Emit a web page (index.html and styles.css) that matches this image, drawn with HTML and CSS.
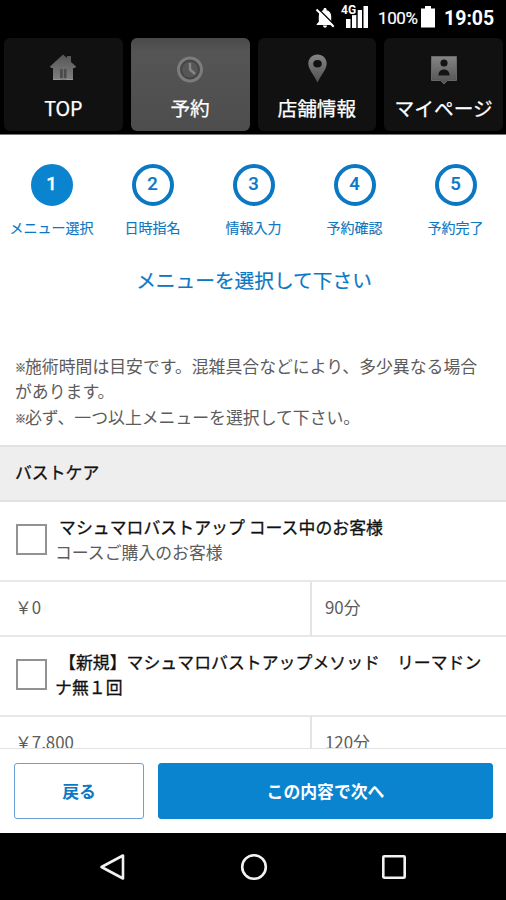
FILE: index.html
```html
<!DOCTYPE html>
<html lang="ja">
<head>
<meta charset="utf-8">
<title>メニュー選択</title>
<link rel="stylesheet" href="styles.css">
</head>
<body>
<div class="status">
  <svg class="bell" width="20" height="22" viewBox="0 0 20 22"><path fill="#fff" d="M10 1c1 0 1.600.7 1.600 1.600v.6c3 .7 4.600 3 4.600 6v5.500l2.200 2.500v.8H1.600v-.8l2.200-2.500V9.200c0-3 1.600-5.300 4.600-6v-.6C8.400 1.700 9 1 10 1zM7.900 18.600h4.200a2.100 2.100 0 0 1-4.200 0z"/><path stroke="#000" stroke-width="1.500" d="M3.500 2l17 17"/><path stroke="#fff" stroke-width="2" d="M1.500 2.500l17.200 17.200"/></svg>
  <div class="signal">
    <span class="net">4G</span>
    <svg width="24" height="24" viewBox="0 0 24 24"><path fill="#fff" d="M1 14h4.500v9H1zM7 10h4.300v13H7zM12.700 5H17v18h-4.300zM18.500 1H23v22h-4.500z"/></svg>
  </div>
  <span class="percent">100%</span>
  <svg class="battery" width="14" height="22" viewBox="0 0 14 22"><path fill="#fff" d="M4 0h6v2.500h4V21.500H0V2.500h4z"/></svg>
  <span class="time">19:05</span>
</div>
<nav class="tabs">
  <div class="tab">
    <svg width="28" height="32" viewBox="0 0 28 32"><defs><linearGradient id="g" x1="0" y1="0" x2="0" y2="1"><stop offset="0" stop-color="#555"/><stop offset="1" stop-color="#808080"/></linearGradient><linearGradient id="h" x1="0" y1="0" x2="0" y2="1"><stop offset="0" stop-color="#858585"/><stop offset="1" stop-color="#515151"/></linearGradient></defs><path fill="url(#g)" d="M14 2.500l4 3.500V4h4v6l5 4.500-1 1.500h-2v12H4V16H2l-1-1.500z"/><path fill="#4b4b4b" d="M11 17h6.500v9H11z"/><path stroke="#777" d="M14.300 17v9"/><path stroke="#999" d="M4 27.500h7M17.500 27.500H24"/></svg>
    <span>TOP</span>
  </div>
  <div class="tab active">
    <svg width="28" height="32" viewBox="0 0 28 32"><circle cx="14" cy="17.500" r="11.500" fill="#444" stroke="#7c7c7c" stroke-width="3"/><circle cx="14" cy="17.500" r="8" fill="#565656"/><path d="M14 11v6.500l5 4.500" fill="none" stroke="#868686" stroke-width="2.400"/></svg>
    <span>予約</span>
  </div>
  <div class="tab">
    <svg width="28" height="32" viewBox="0 0 28 32"><path fill="url(#h)" fill-rule="evenodd" d="M14.500 2.500c5.200 0 9.200 3.900 9.200 9 0 6-5.500 11-9.200 19-3.700-8-9.200-13-9.200-19 0-5.100 4-9 9.200-9zm0 5.500a4.300 3.800 0 1 0 0 7.600 4.300 3.800 0 0 0 0-7.600z"/></svg>
    <span>店舗情報</span>
  </div>
  <div class="tab">
    <svg width="28" height="32" viewBox="0 0 28 32"><path fill="url(#h)" stroke="#686868" stroke-width="1" d="M1.500 4.500h25v24h-9L14 32l-3.500-3.500h-9z"/><circle cx="14" cy="11" r="3.600" fill="#141414"/><path fill="#141414" d="M8.500 23.500c-.5-8 11.500-8 11 0z"/></svg>
    <span>マイページ</span>
  </div>
</nav>
<main class="page">
  <ol class="steps">
    <li class="current"><b>1</b><span>メニュー選択</span></li>
    <li><b>2</b><span>日時指名</span></li>
    <li><b>3</b><span>情報入力</span></li>
    <li><b>4</b><span>予約確認</span></li>
    <li><b>5</b><span>予約完了</span></li>
  </ol>
  <h1>メニューを選択して下さい</h1>
  <p class="notes"><i>※</i>施術時間は目安です。混雑具合などにより、多少異なる場合<br>があります。<br><i>※</i>必ず、一つ以上メニューを選択して下さい。</p>
  <h2>バストケア</h2>
  <section class="item">
    <span class="check"></span>
    <div class="copy"><strong><span class="lead"></span>マシュマロバストアップ コース中のお客様</strong><br>コースご購入のお客様</div>
  </section>
  <div class="facts"><span>￥0</span><span>90分</span></div>
  <section class="item">
    <span class="check"></span>
    <div class="copy"><strong><span class="lead"></span>【新規】マシュマロバストアップメソッド　リーマドン<br>ナ無１回</strong></div>
  </section>
  <div class="facts"><span>￥7,800</span><span>120分</span></div>
</main>
<footer class="actions">
  <button class="back">戻る</button>
  <button class="next">この内容で次へ</button>
</footer>
<div class="system">
  <svg width="28" height="30" viewBox="0 0 28 30"><path fill="none" stroke="#f2f2f2" stroke-width="2.600" stroke-linejoin="round" d="M24 3.500v23L2.500 15z"/></svg>
  <svg width="28" height="30" viewBox="0 0 28 30"><circle cx="14" cy="15" r="11.800" fill="none" stroke="#f2f2f2" stroke-width="2.600"/></svg>
  <svg width="28" height="30" viewBox="0 0 28 30"><rect x="3.300" y="4.300" width="21.400" height="21.400" rx="1" fill="none" stroke="#f2f2f2" stroke-width="2.600"/></svg>
</div>
</body>
</html>
```
FILE: styles.css
```css
* { box-sizing: border-box; }
body {
  margin: 0;
  height: 900px;
  display: flex;
  flex-direction: column;
  overflow: hidden;
  background: #fff;
  color: #5c5c5c;
  font: 16.85px/25.3px "Noto Sans CJK JP", sans-serif;
}
svg { display: block; flex: none; }

.status {
  height: 38px;
  flex: none;
  display: flex;
  align-items: flex-start;
  padding: 6px 12px 0 0;
  justify-content: flex-end;
  background: #000;
  color: #fff;
  font-family: Roboto, sans-serif;
}
.bell { margin: 1px 6px 0 0; }
.signal { position: relative; width: 28px; height: 24px; padding-left: 4px; }
.signal svg { margin-top: -1px; }
.net {
  position: absolute;
  left: 0;
  top: -2px;
  font-size: 12px;
  line-height: 13px;
  font-weight: 700;
  text-shadow: 0 0 2px #000, 1px 1px 1px #000;
}
.percent { margin-left: 9px; font-size: 17px; line-height: 24px; width: 41px; white-space: nowrap; letter-spacing: -.4px; -webkit-text-stroke: .2px #fff; }
.battery { margin-left: 2px; }
.time { margin-left: 9px; width: 50px; font-size: 19.500px; line-height: 25px; font-weight: 700; }

.tabs {
  height: 97px;
  flex: none;
  display: grid;
  grid-template-columns: repeat(4, 1fr);
  gap: 8px;
  padding: 0 3px 3px 4px;
  background: #000;
  border-bottom: 1px solid #777;
}
.tab {
  display: flex;
  flex-direction: column;
  align-items: center;
  padding-top: 14px;
  border-radius: 6px;
  background: #111;
  color: #fff;
  font-size: 19.700px;
  line-height: 30px;
  white-space: nowrap;
  -webkit-text-stroke: .25px #fff;
}
.tab svg { -webkit-text-stroke: 0; }
.tab span { margin-top: 9px; }
.tab.active { background: linear-gradient(#4a4a4a, #555 15%, #4d4d4d); }

.page { height: 613px; flex: none; overflow: hidden; }
.steps {
  list-style: none;
  margin: 0;
  padding: 29px 0 0 1px;
  display: grid;
  grid-template-columns: repeat(5, 1fr);
  color: #0b78c4;
}
.steps li {
  display: flex;
  flex-direction: column;
  align-items: center;
  font-size: 14px;
  line-height: 22px;
  -webkit-text-stroke: .15px #0b78c4;
}
.steps b {
  width: 42px;
  height: 42px;
  margin-bottom: 10px;
  border: 4px solid #0b78c4;
  border-radius: 50%;
  font: 500 18.500px/33px Roboto, sans-serif;
  text-align: center;
}
.steps .current b { background: #0b84d0; border-color: #0b84d0; color: #fff; -webkit-text-stroke: .3px #fff; }
h1 {
  margin: 27px 0 0;
  color: #0b78c4;
  font-size: 19.700px;
  line-height: 30px;
  font-weight: 400;
  text-align: center;
  padding-left: 2px;
  -webkit-text-stroke: .2px #0b78c4;
}
.notes { margin: 58px 0 0; padding-left: 15px; height: 92px; white-space: nowrap; }
.notes i { display: inline-block; font-size: 11px; font-style: normal; width: 10px; line-height: 1; vertical-align: 1px; -webkit-text-stroke: .3px #5c5c5c; }
h2 {
  margin: 0;
  height: 57px;
  padding-left: 15px;
  border: 2px solid #e2e2e2;
  border-width: 2px 0;
  background: #eee;
  color: #111;
  font-size: 16.850px;
  line-height: 50px;
  font-weight: 400;
  -webkit-text-stroke: .3px #111;
}
.item { height: 78px; display: flex; align-items: center; padding: 0 0 4px 16px; }
.check { width: 31px; height: 31px; border: 2px solid #929292; flex: none; }
.copy { margin-left: 8px; white-space: nowrap; }
.copy strong { color: #111; font-weight: 400; letter-spacing: .05px; -webkit-text-stroke: .3px #111; }
.lead { display: inline-block; width: 4px; }
.facts {
  height: 57px;
  display: grid;
  grid-template-columns: 310px 1fr;
  border: 2px solid #e8e8e8;
  border-width: 2px 0;
  line-height: 50px;
}
.facts span { padding-left: 15px; }
.facts span + span { padding-left: 13px; border-left: 2px solid #e4e4e4; }

.actions {
  height: 85px;
  flex: none;
  display: grid;
  grid-template-columns: 130px 1fr;
  gap: 14px;
  padding: 14px 13px 14px 14px;
  border-top: 1px solid #e2e2e2;
  background: #fff;
}
.actions button { border-radius: 3px; font: 700 16.850px/25px "Noto Sans CJK JP", sans-serif; padding: 0 0 2px; }
.back { background: #fff; border: 1px solid #6c9ed8; color: #0b78c4; }
.next { background: #0b84d0; border: 1px solid #0b84d0; color: #fff; }
.system {
  height: 67px;
  flex: none;
  display: flex;
  justify-content: center;
  gap: 112.500px;
  padding: 19px 0 0 1px;
  background: #000;
}
```
